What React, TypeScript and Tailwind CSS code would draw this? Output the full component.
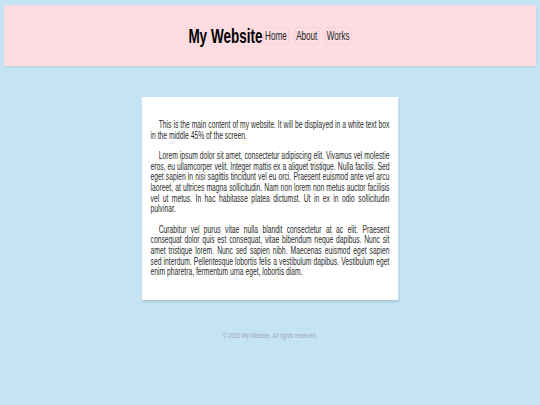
export default function App() {
  return (
    <div className="w-[540px] h-[405px] overflow-hidden bg-[#c4e3f3]">
      {/* page is laid out at 800px and squeezed horizontally, like the reference */}
      <div className="w-[800px] origin-top-left scale-x-[0.675] font-['Liberation_Sans',Arial,sans-serif]">
        <header className="mx-[6px] mt-[5px] h-[61px] bg-[#fddde2] shadow-[1px_1px_2px_rgba(0,0,0,0.08)] flex items-center justify-center">
          <h1 className="text-[20px] leading-[24px] font-bold text-black">My Website</h1>
          <nav className="flex items-center gap-[8px] ml-[1px]">
            <a className="px-[2px] py-[1px] text-[12px] leading-[14px] text-[#222] border border-[#f7cbd3] rounded-[3px]">Home</a>
            <a className="px-[2px] py-[1px] text-[12px] leading-[14px] text-[#222] border border-[#f7cbd3] rounded-[3px]">About</a>
            <a className="px-[2px] py-[1px] text-[12px] leading-[14px] text-[#222] border border-[#f7cbd3] rounded-[3px]">Works</a>
          </nav>
        </header>

        <main className="mt-[31px] mx-auto w-[354px] box-content px-[13px] pt-[13px] pb-[12px] bg-white shadow-[1px_2px_3px_rgba(0,0,0,0.12)] text-[10px] leading-[10.6px] text-[#2a2a2a] text-justify">
          <p className="my-[10px] indent-[12px]">
            This is the main content of my website. It will be displayed in a white text box in the middle 45% of the screen.
          </p>
          <p className="my-[10px] indent-[12px]">
            Lorem ipsum dolor sit amet, consectetur adipiscing elit. Vivamus vel molestie eros, eu ullamcorper velit. Integer mattis ex a aliquet tristique. Nulla facilisi. Sed eget sapien in nisi sagittis tincidunt vel eu orci. Praesent euismod ante vel arcu laoreet, at ultrices magna sollicitudin. Nam non lorem non metus auctor facilisis vel ut metus. In hac habitasse platea dictumst. Ut in ex in odio sollicitudin pulvinar.
          </p>
          <p className="my-[10px] indent-[12px]">
            Curabitur vel purus vitae nulla blandit consectetur at ac elit. Praesent consequat dolor quis est consequat, vitae bibendum neque dapibus. Nunc sit amet tristique lorem. Nunc sed sapien nibh. Maecenas euismod eget sapien sed interdum. Pellentesque lobortis felis a vestibulum dapibus. Vestibulum eget enim pharetra, fermentum urna eget, lobortis diam.
          </p>
        </main>

        <footer className="mt-[31px] text-center text-[8px] leading-[10px] text-[#a0a8b0]">
          © 2023 My Website. All rights reserved.
        </footer>
      </div>
    </div>
  );
}
